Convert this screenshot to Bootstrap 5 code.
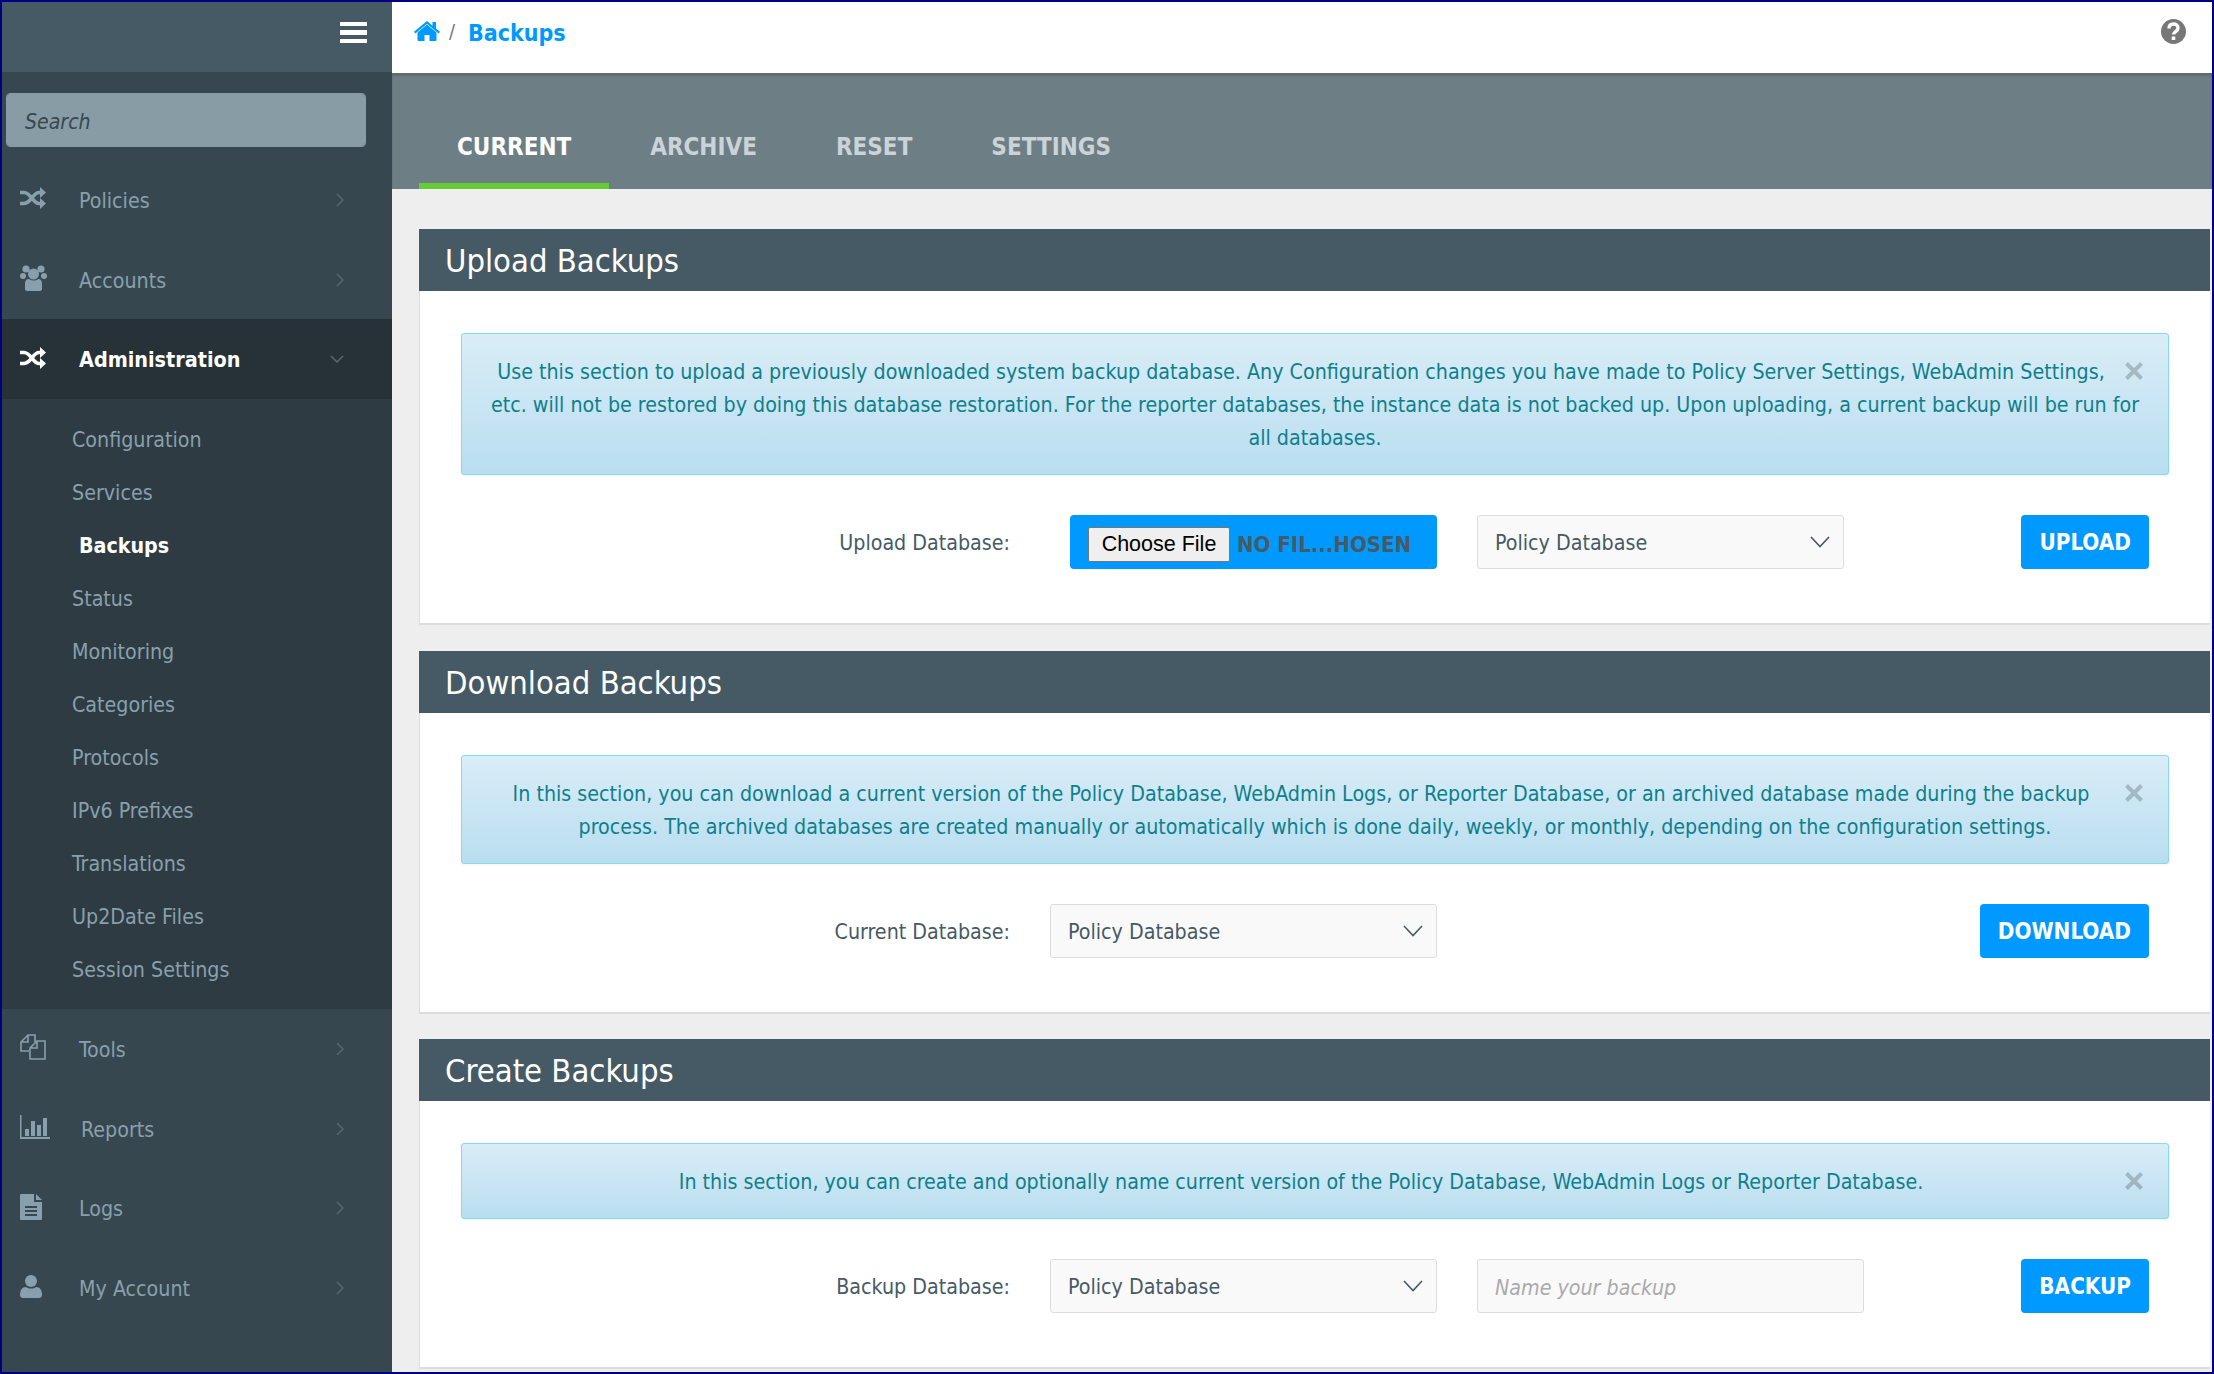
<!DOCTYPE html>
<html lang="en">
<head>
  <meta charset="UTF-8">
  <title>Backups</title>
  <meta name="viewport" content="width=device-width, initial-scale=1">
  <link href="https://cdn.jsdelivr.net/npm/bootstrap@5.3.3/dist/css/bootstrap.min.css" rel="stylesheet">
  <style>
    html, body { height: 100%; }
    body {
      background-color: #eeeeee;
      border: 2px solid #000080;
      overflow: hidden;
      font-family: "DejaVu Sans Condensed", "DejaVu Sans", sans-serif;
      font-stretch: condensed;
      font-size: 21.25px;
      color: #465a65;
    }
    .page-wrap { height: 100%; }

    .side-bar { width: 390px; flex: none; background-color: #37474f; }
    .side-top { height: 70px; background-color: #465a65; padding: 20px 25px 0 0; }
    .burger { display: block; width: 27px; height: 21px; border-top: 4.5px solid #fff; border-bottom: 4.5px solid #fff; position: relative; }
    .burger::after { content: ""; position: absolute; left: 0; right: 0; top: 4px; height: 4.5px; background: #fff; }
    .side-search { height: 88px; padding: 21px 26px 0 4px; }
    .side-search .form-control {
      height: 54px; background-color: #879ca5; border: 1px solid #879ca5; border-radius: 4px;
      font-size: 21.1px; font-style: italic; padding: 2px 0 0 18px; color: #37474f;
    }
    .side-search .form-control::placeholder { color: #37474f; opacity: 1; }
    .side-link {
      height: 79.7px; display: flex; align-items: center; color: #88a0ad; text-decoration: none;
      padding: 0 48px 0 18px;
    }
    .side-link .ico { width: 59px; flex: none; display: flex; margin-top: -3px; }
    .side-link .lbl { flex: 1; padding-top: 2px; }
    .side-link .lbl-chart { padding-left: 2px; }
    .side-link.is-open { background-color: #263238; color: #fff; font-weight: 700; }
    .side-link.is-open .lbl { font-size: 21.4px; }
    .side-link.is-open .ico { color: #fff; }
    .side-sub { background-color: #2e3b43; padding: 14px 0 13px; margin: 0; list-style: none; }
    .side-sub a { display: flex; align-items: center; height: 53px; padding-left: 70px; color: #88a0ad; text-decoration: none; }
    .side-sub a.is-here { padding-left: 77px; color: #fff; font-weight: 700; }
    .chev { color: #55686f; flex: none; }

    .main-col { min-width: 0; }
    .top-strip { height: 71px; background-color: #fff; padding: 0 26px 8px 22px; flex: none; }
    .top-strip .breadcrumb { margin: 0; font-size: 23px; font-weight: 700; align-items: center; }
    .top-strip .breadcrumb a { color: #0099ff; text-decoration: none; display: flex; }
    .top-strip .breadcrumb a svg { margin-top: -5px; }
    .top-strip .breadcrumb-item + .breadcrumb-item { padding-left: 9px; }
    .top-strip .breadcrumb-item + .breadcrumb-item::before { font-weight: 400; color: #777; padding-right: 13px; font-size: 20px; }
    .help-ico { margin-top: -5px; }
    .tab-strip {
      height: 116px; background-color: #6e7e85; flex: none; padding: 0 0 0 27px;
      border-top: 1px solid #5d6b72; box-shadow: inset 0 2px 2px rgba(0,0,0,.15);
      align-items: flex-end; gap: 3px;
    }
    .tab-strip .nav-link {
      height: 79px; padding: 16px 38px 0; border-bottom: 6px solid transparent; border-radius: 0;
      color: #c9d3d8; font-weight: 700; font-size: 24px; line-height: 42px;
    }
    .tab-strip .nav-link.active { color: #fff; border-bottom-color: #66cc33; }

    .page-body { padding: 40px 2px 0 27px; }
    .panel-box { border: 0; border-radius: 0; margin-bottom: 25.5px; background: #fff; border-bottom: 2px solid #ddd; border-left: 1px solid #ddd; }
    .panel-box .card-header {
      height: 62px; background-color: #465a65; color: #fff; border: 0; border-radius: 0;
      font-size: 32.5px; line-height: 64px; padding: 0 0 0 26px; margin-left: -1px;
    }
    .panel-box .card-body { padding: 42px 41px 54px 41px; }
    .panel-box .alert {
      background-image: linear-gradient(to bottom, #d9edf7 0, #b9def0 100%);
      border: 1px solid #85dce6; border-radius: 3px; color: #0f7f8c; text-align: center;
      padding: 21px 28px 20px; margin-bottom: 40px; line-height: 33px;
      box-shadow: 0 1px 2px rgba(0,0,0,.05);
    }
    .close-x {
      float: right; width: 28px; height: 33px; padding: 0; border: 0; background: none;
      color: #000; opacity: .2; display: flex; justify-content: flex-end;
    }
    .close-x svg { margin: 7px -3px 0 0; flex: none; }
    .form-line { height: 54px; display: flex; align-items: center; }
    .form-line label { width: 549px; flex: none; text-align: right; padding-top: 2px; }
    .form-line .form-select, .form-line .form-control {
      height: 54px; background-color: #f9f9f9; border: 1px solid #ddd; border-radius: 3px;
      font-size: 21.25px; color: #465a65; padding-left: 17px; padding-top: 8px;
    }
    .form-line .form-select {
      background-image: url("data:image/svg+xml,%3csvg xmlns='http://www.w3.org/2000/svg' viewBox='0 0 20 12'%3e%3cpath fill='none' stroke='%23465a65' stroke-width='1.6' d='M1 1l9 9.500 9-9.500'/%3e%3c/svg%3e");
      background-size: 20px 12px; background-position: right 13px center;
    }
    .form-line .form-control::placeholder { color: #aaa; font-style: italic; opacity: 1; }
    .sel-wide { width: 367px; flex: none; }
    .sel-long { width: 387px; flex: none; }
    .gap-left { margin-left: 40px; }
    .gap-label { margin-left: 40px; }
    .gap-label-file { margin-left: 60px; }
    .file-box {
      width: 367px; height: 54px; flex: none; background-color: #0099ff; border-radius: 4px;
      display: flex; align-items: center; padding: 4px 0 0 18px; font-weight: 700; font-size: 22px; color: #465a65;
    }
    .file-box button {
      width: 142px; height: 35px; margin-right: 7px; padding: 0; background: #efefef; border: 1px solid #767676; border-radius: 2px;
      font-family: "Liberation Sans", sans-serif; font-size: 21.5px; font-weight: 400; color: #000;
    }
    .btn-blue {
      height: 54px; background-color: #0099ff; border: 0; border-radius: 4px; color: #fff; font-weight: 700;
      font-size: 22.3px; padding: 2px 18px 0; margin-left: auto; margin-right: 20px; text-transform: uppercase;
    }
    .btn-blue:hover { background-color: #0088ee; color: #fff; }
  </style>
</head>
<body>
  <svg width="0" height="0" class="position-absolute">
    <symbol id="i-shuffle" viewBox="0 0 26 22">
      <path fill="none" stroke="currentColor" stroke-width="3.600" d="M0 5.500h4c7 0 9 11 15 11h3M0 16.500h4c7 0 9-11 15-11h3"/>
      <path fill="currentColor" d="M20 0l6 5.500-6 5.500zM20 11l6 5.500-6 5.500z"/>
    </symbol>
    <symbol id="i-users" viewBox="0 0 27 26">
      <circle cx="6" cy="4" r="3.600" fill="currentColor"/><circle cx="21" cy="4" r="3.600" fill="currentColor"/>
      <circle cx="3" cy="11" r="3" fill="currentColor"/><circle cx="24" cy="11" r="3" fill="currentColor"/>
      <circle cx="13.500" cy="9" r="5.500" fill="currentColor"/>
      <path fill="currentColor" d="M5 19c0-4 2-5 4-5 1.500 1 3 1.500 4.500 1.500S17 15 18 14c3 0 4 2 4 5v5c0 1-1 2-2 2H7c-1 0-2-1-2-2z"/>
    </symbol>
    <symbol id="i-files" viewBox="0 0 26 26">
      <path fill="none" stroke="currentColor" stroke-width="1.600" d="M15 8V1H8L1 8v9h8M8 1v7H1"/>
      <path fill="none" stroke="currentColor" stroke-width="1.600" d="M25 7v18H10v-11l7-7zM17 7v7h-7"/>
    </symbol>
    <symbol id="i-chart" viewBox="0 0 30 24">
      <path fill="currentColor" d="M0 0h1.500v22H30v2H0zM5 14h4v7H5zM11 6h4v15h-4zM17 10h4v11h-4zM23 3h4v18h-4z"/>
    </symbol>
    <symbol id="i-doc" viewBox="0 0 22 26">
      <path fill-rule="evenodd" fill="currentColor" d="M1 0h13v8h8v17c0 .5-.5 1-1 1H1c-.5 0-1-.5-1-1V1c0-.5.500-1 1-1zM5 12v2h12v-2zM5 16v2h12v-2zM5 20v2h12v-2z"/>
      <path fill="currentColor" d="M16 0l6 6h-6z"/>
    </symbol>
    <symbol id="i-user" viewBox="0 0 22 23">
      <circle cx="11" cy="6" r="6" fill="currentColor"/>
      <path fill="currentColor" d="M0 20c0-5 2-8 6-8 1.500 1 3 1.500 5 1.500s3.500-.5 5-1.500c4 0 6 3 6 8 0 2-1.500 3-3 3H3c-1.500 0-3-1-3-3z"/>
    </symbol>
    <symbol id="i-right" viewBox="0 0 8 14"><path fill="none" stroke="currentColor" stroke-width="1.500" d="M1 1l6 6-6 6"/></symbol>
    <symbol id="i-down" viewBox="0 0 14 8"><path fill="none" stroke="currentColor" stroke-width="1.500" d="M1 1l6 6 6-6"/></symbol>
    <symbol id="i-x" viewBox="0 0 18 18"><path fill="none" stroke="currentColor" stroke-width="4" d="M1.500 1.500l15 15M16.500 1.500l-15 15"/></symbol>
  </svg>

  <div class="page-wrap d-flex">
    <aside class="side-bar">
      <div class="side-top d-flex justify-content-end"><span class="burger"></span></div>
      <div class="side-search"><input class="form-control" type="text" placeholder="Search"></div>
      <a class="side-link" href="#"><span class="ico"><svg width="26" height="22"><use href="#i-shuffle"/></svg></span><span class="lbl">Policies</span><svg class="chev" width="8" height="14"><use href="#i-right"/></svg></a>
      <a class="side-link" href="#"><span class="ico"><svg width="27" height="26"><use href="#i-users"/></svg></span><span class="lbl">Accounts</span><svg class="chev" width="8" height="14"><use href="#i-right"/></svg></a>
      <a class="side-link is-open" href="#"><span class="ico"><svg width="26" height="22"><use href="#i-shuffle"/></svg></span><span class="lbl">Administration</span><svg class="chev" width="14" height="8"><use href="#i-down"/></svg></a>
      <ul class="side-sub">
        <li><a href="#">Configuration</a></li>
        <li><a href="#">Services</a></li>
        <li><a class="is-here" href="#">Backups</a></li>
        <li><a href="#">Status</a></li>
        <li><a href="#">Monitoring</a></li>
        <li><a href="#">Categories</a></li>
        <li><a href="#">Protocols</a></li>
        <li><a href="#">IPv6 Prefixes</a></li>
        <li><a href="#">Translations</a></li>
        <li><a href="#">Up2Date Files</a></li>
        <li><a href="#">Session Settings</a></li>
      </ul>
      <a class="side-link" href="#"><span class="ico"><svg width="26" height="26"><use href="#i-files"/></svg></span><span class="lbl">Tools</span><svg class="chev" width="8" height="14"><use href="#i-right"/></svg></a>
      <a class="side-link" href="#"><span class="ico"><svg width="30" height="24"><use href="#i-chart"/></svg></span><span class="lbl lbl-chart">Reports</span><svg class="chev" width="8" height="14"><use href="#i-right"/></svg></a>
      <a class="side-link" href="#"><span class="ico"><svg width="22" height="26"><use href="#i-doc"/></svg></span><span class="lbl">Logs</span><svg class="chev" width="8" height="14"><use href="#i-right"/></svg></a>
      <a class="side-link" href="#"><span class="ico"><svg width="22" height="23"><use href="#i-user"/></svg></span><span class="lbl">My Account</span><svg class="chev" width="8" height="14"><use href="#i-right"/></svg></a>
    </aside>

    <div class="main-col flex-grow-1 d-flex flex-column">
      <div class="top-strip d-flex align-items-center justify-content-between">
        <ol class="breadcrumb">
          <li class="breadcrumb-item"><a href="#"><svg width="26" height="20" viewBox="0 0 26 20"><path fill="currentColor" d="M13 3.500L3.500 11.500V19c0 .5.500 1 1 1h6v-6h5v6h6c.5 0 1-.5 1-1v-7.500zM13 0L0 10.700l1.400 1.700L13 2.800l11.600 9.600 1.400-1.700-4-3.300V1h-3.500v3.800z"/></svg></a></li>
          <li class="breadcrumb-item"><a href="#">Backups</a></li>
        </ol>
        <svg class="help-ico" width="25" height="25" viewBox="0 0 25 25"><circle cx="12.500" cy="12.500" r="12.500" fill="#777"/><path fill="none" stroke="#fff" stroke-width="3.400" d="M8 9.500c0-3 2-4.500 4.500-4.500s4.500 1.500 4.500 4c0 3.500-4.500 3.500-4.500 6.500"/><rect x="10.700" y="17.500" width="3.600" height="3.500" fill="#fff"/></svg>
      </div>

      <ul class="nav tab-strip">
        <li class="nav-item"><a class="nav-link active" href="#">CURRENT</a></li>
        <li class="nav-item"><a class="nav-link" href="#">ARCHIVE</a></li>
        <li class="nav-item"><a class="nav-link" href="#">RESET</a></li>
        <li class="nav-item"><a class="nav-link" href="#">SETTINGS</a></li>
      </ul>

      <div class="page-body">
        <div class="card panel-box">
          <div class="card-header">Upload Backups</div>
          <div class="card-body">
            <div class="alert alert-info">
              <button type="button" class="close-x" aria-label="Close"><svg width="18" height="18"><use href="#i-x"/></svg></button>
              Use this section to upload a previously downloaded system backup database. Any Configuration changes you have made to Policy Server Settings, WebAdmin Settings, etc. will not be restored by doing this database restoration. For the reporter databases, the instance data is not backed up. Upon uploading, a current backup will be run for all databases.
            </div>
            <div class="form-line">
              <label>Upload Database:</label>
              <div class="file-box gap-label-file"><button type="button">Choose File</button><span>NO FIL...HOSEN</span></div>
              <select class="form-select sel-wide gap-left"><option>Policy Database</option></select>
              <button type="button" class="btn btn-blue">Upload</button>
            </div>
          </div>
        </div>

        <div class="card panel-box">
          <div class="card-header">Download Backups</div>
          <div class="card-body">
            <div class="alert alert-info">
              <button type="button" class="close-x" aria-label="Close"><svg width="18" height="18"><use href="#i-x"/></svg></button>
              In this section, you can download a current version of the Policy Database, WebAdmin Logs, or Reporter Database, or an archived database made during the backup process. The archived databases are created manually or automatically which is done daily, weekly, or monthly, depending on the configuration settings.
            </div>
            <div class="form-line">
              <label>Current Database:</label>
              <select class="form-select sel-long gap-label"><option>Policy Database</option></select>
              <button type="button" class="btn btn-blue">Download</button>
            </div>
          </div>
        </div>

        <div class="card panel-box">
          <div class="card-header">Create Backups</div>
          <div class="card-body">
            <div class="alert alert-info">
              <button type="button" class="close-x" aria-label="Close"><svg width="18" height="18"><use href="#i-x"/></svg></button>
              In this section, you can create and optionally name current version of the Policy Database, WebAdmin Logs or Reporter Database.
            </div>
            <div class="form-line">
              <label>Backup Database:</label>
              <select class="form-select sel-long gap-label"><option>Policy Database</option></select>
              <input class="form-control sel-long gap-left" type="text" placeholder="Name your backup">
              <button type="button" class="btn btn-blue">Backup</button>
            </div>
          </div>
        </div>
      </div>
    </div>
  </div>

  <script src="https://cdn.jsdelivr.net/npm/bootstrap@5.3.3/dist/js/bootstrap.bundle.min.js"></script>
</body>
</html>
